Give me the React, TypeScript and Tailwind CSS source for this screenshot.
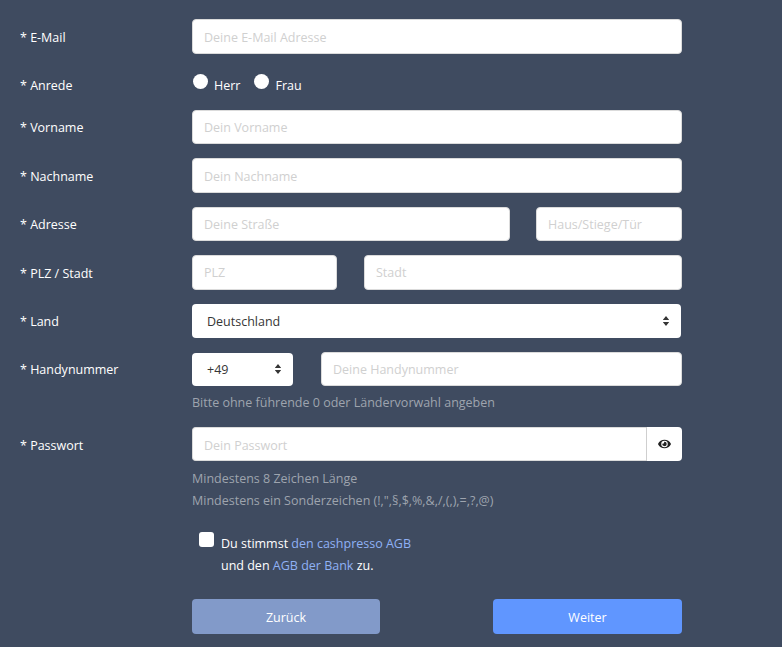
import * as React from "react"
import { FaEye } from "react-icons/fa"

const inputClass =
  "h-[34.5px] min-w-0 rounded-[4px] border border-[#dbdbdb] bg-white px-[11px] pt-[1px] text-[12.5px] text-[#363636] outline-none placeholder:text-[#d0d0d0]"

function Row({ label, className, children }: { label: string; className: string; children: React.ReactNode }) {
  return (
    <div className={"flex " + className}>
      <label className="h-[34.5px] w-[192px] shrink-0 pl-5 text-[12.5px] leading-[35px] text-white">* {label}</label>
      <div className="w-[490px]">{children}</div>
    </div>
  )
}

function SortArrows() {
  return (
    <svg viewBox="0 0 8 12" className="pointer-events-none absolute top-1/2 right-[11px] h-[11px] w-[8px] -translate-y-1/2" fill="#363636">
      <path d="M4 0.5 7.5 5H0.5zM4 11.5 0.5 7H7.5z" />
    </svg>
  )
}

function Select({ value, className }: { value: string; className: string }) {
  return (
    <div className={"relative " + className}>
      <select
        defaultValue={value}
        className="h-full w-full appearance-none rounded-[4px] bg-white pl-[15px] pt-[1px] text-[12.5px] text-[#363636] outline-none"
      >
        <option>{value}</option>
      </select>
      <SortArrows />
    </div>
  )
}

function Radio({ label }: { label: string }) {
  return (
    <div className="flex items-start">
      <span className="ml-px mt-[5px] h-[15px] w-[15px] rounded-full bg-white" />
      <span className="ml-[6px] mt-[8px] text-[12.5px] leading-[18px] text-white">{label}</span>
    </div>
  )
}

export default function App() {
  return (
    <div className="h-[647px] w-[782px] overflow-hidden bg-[#3f4b60] pt-[19.4px] font-['Open_Sans',sans-serif]">
      <Row label="E-Mail" className="mb-[13.9px] [&>label]:leading-[37px]">
        <input className={inputClass + " w-full pt-[2px]"} placeholder="Deine E-Mail Adresse" />
      </Row>

      <Row label="Anrede" className="h-[28.3px] mb-[13.9px] [&>label]:leading-[18px] [&>label]:pt-[9px]">
        <div className="flex gap-[13px] pt-px">
          <Radio label="Herr" />
          <Radio label="Frau" />
        </div>
      </Row>

      <Row label="Vorname" className="mb-[13.9px]">
        <input className={inputClass + " w-full"} placeholder="Dein Vorname" />
      </Row>

      <Row label="Nachname" className="mb-[13.9px] [&>label]:leading-[37px]">
        <input className={inputClass + " w-full"} placeholder="Dein Nachname" />
      </Row>

      <Row label="Adresse" className="mb-[13.9px]">
        <div className="flex justify-between">
          <input className={inputClass + " w-[318px]"} placeholder="Deine Straße" />
          <input className={inputClass + " w-[146px]"} placeholder="Haus/Stiege/Tür" />
        </div>
      </Row>

      <Row label="PLZ / Stadt" className="mb-[13.9px] [&>label]:leading-[37px]">
        <div className="flex justify-between">
          <input className={inputClass + " w-[145px]"} placeholder="PLZ" />
          <input className={inputClass + " w-[318px]"} placeholder="Stadt" />
        </div>
      </Row>

      <Row label="Land" className="mb-[13.9px]">
        <Select value="Deutschland" className="h-[34px] w-[489px] [&>select]:pt-[3px]" />
      </Row>

      <Row label="Handynummer" className="mb-[6px]">
        <div className="flex justify-between">
          <Select value="+49" className="mt-px h-[33px] w-[101px]" />
          <input className={inputClass + " w-[361px]"} placeholder="Deine Handynummer" />
        </div>
        <p className="mt-[7.9px] text-[12.5px] leading-[18px] text-[#9ea4ae]">Bitte ohne führende 0 oder Ländervorwahl angeben</p>
      </Row>

      <Row label="Passwort" className="mt-[14.4px] [&>label]:leading-[37px]">
        <div className="flex">
          <input className={inputClass + " w-[454px] rounded-r-none border-r-0 pt-[3px]"} placeholder="Dein Passwort" />
          <button className="flex h-[34.5px] w-[36px] items-center justify-center rounded-r-[4px] border-l border-[#cfcfcf] bg-white text-[#222]">
            <FaEye className="h-[12px] w-[13px]" />
          </button>
        </div>
        <p className="mt-[7px] text-[12.5px] leading-[22px] text-[#9ea4ae]">Mindestens 8 Zeichen Länge</p>
        <p className="text-[12.5px] leading-[22px] text-[#9ea4ae]">Mindestens ein Sonderzeichen (!,",§,$,%,&,/,(,),=,?,@)</p>
      </Row>

      <div className="ml-[199px] mt-[20px] flex items-start">
        <span className="h-[15px] w-[15px] rounded-[3px] bg-white" />
        <p className="ml-[7px] mt-[1px] text-[12.5px] leading-[22px] text-white">
          Du stimmst <a className="text-[#8fb1f5]">den cashpresso AGB</a>
          <br />
          und den <a className="text-[#8fb1f5]">AGB der Bank</a> zu.
        </p>
      </div>

      <div className="ml-[192px] mt-[22px] flex w-[490px] justify-between">
        <button className="h-[35px] w-[188px] rounded-[4px] bg-[#829ac9] pt-[4px] text-[12.5px] text-white">Zurück</button>
        <button className="h-[35px] w-[189px] rounded-[4px] bg-[#6096ff] pt-[4px] text-[12.5px] text-white">Weiter</button>
      </div>
    </div>
  )
}
